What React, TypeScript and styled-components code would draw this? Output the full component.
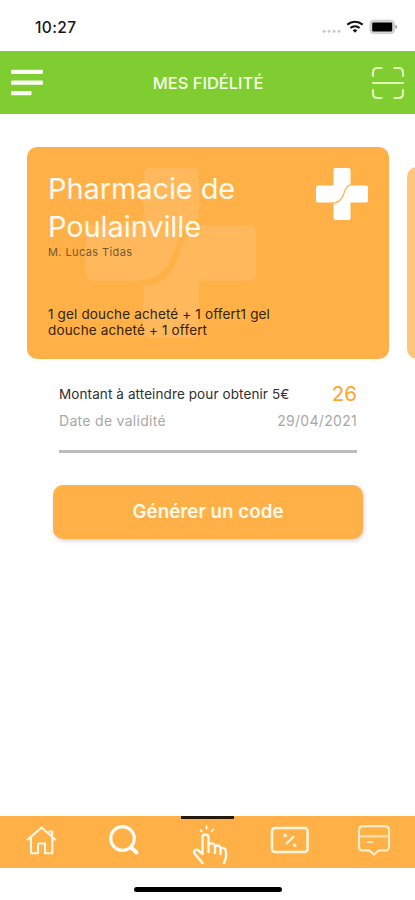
import React from "react";
import styled, { createGlobalStyle } from "styled-components";

const ORANGE = "#ffb147";
const GREEN = "#80cd32";

const GlobalStyle = createGlobalStyle`
  * { box-sizing: border-box; }
  body { margin: 0; background: #fff; font-family: Inter, "Liberation Sans", sans-serif; }
  svg { display: block; flex: none; }
`;

const Screen = styled.div`
  width: 415px;
  height: 900px;
  overflow: hidden;
  display: flex;
  flex-direction: column;
  background: #fff;
`;

const StatusBar = styled.div`
  height: 51px;
  flex: none;
  display: flex;
  justify-content: space-between;
  padding: 18px 17px 0 35px;
`;

const Time = styled.span`
  font-size: 15.5px;
  line-height: 19px;
  font-weight: 500;
  letter-spacing: 0.4px;
  color: #161616;
`;

const Header = styled.header`
  height: 63px;
  flex: none;
  display: grid;
  grid-template-columns: 60px 1fr 60px;
  align-items: center;
  padding: 0 10px 0 11px;
  background: ${GREEN};
`;

const Title = styled.h1`
  margin: 0;
  font-size: 16.5px;
  line-height: 20px;
  font-weight: 500;
  text-align: center;
  color: #f7ffe8;
`;

const IconButton = styled.button<{ $end?: boolean }>`
  display: flex;
  justify-content: ${(p) => (p.$end ? "flex-end" : "flex-start")};
  padding: 0;
  border: 0;
  background: none;
`;

const Carousel = styled.div`
  display: flex;
  align-items: flex-end;
  gap: 18px;
  height: 212px;
  flex: none;
  margin: 33px 0 0 27px;
`;

const Card = styled.article`
  position: relative;
  width: 361.5px;
  height: 212px;
  flex: none;
  display: flex;
  flex-direction: column;
  padding: 21px;
  border-radius: 10px;
  background: ${ORANGE};
`;

const NextCard = styled.div`
  width: 361px;
  height: 192px;
  flex: none;
  border-radius: 10px;
  background: #ffc57a;
`;

const Watermark = styled.div`
  position: absolute;
  left: 59px;
  top: 21px;
`;

const CardTop = styled.div`
  position: relative;
  display: flex;
  justify-content: space-between;
`;

const ShopName = styled.h2`
  margin: 0;
  padding-top: 2px;
  width: 220px;
  font-size: 29px;
  line-height: 38px;
  font-weight: 400;
  letter-spacing: -0.1px;
  color: #fffaf0;
`;

const Owner = styled.div`
  position: relative;
  margin-top: -1px;
  font-size: 11px;
  line-height: 14px;
  letter-spacing: 0.4px;
  color: #77592f;
`;

const Offer = styled.p`
  position: relative;
  margin: auto 0 0;
  width: 240px;
  font-size: 13.5px;
  line-height: 16px;
  letter-spacing: 0.15px;
  color: #35230a;
`;

const Details = styled.section`
  flex: none;
  margin: 21px 58px 0 59px;
  height: 73px;
  border-bottom: 3px solid #bdbdbd;
`;

const Row = styled.div<{ $height: number }>`
  display: flex;
  align-items: center;
  justify-content: space-between;
  height: ${(p) => p.$height}px;
`;

const Label = styled.span<{ $muted?: boolean }>`
  font-size: ${(p) => (p.$muted ? 14 : 13.5)}px;
  letter-spacing: ${(p) => (p.$muted ? 0.3 : 0.1)}px;
  color: ${(p) => (p.$muted ? "#a8a8a8" : "#303030")};
  white-space: nowrap;
`;

const Amount = styled.span`
  font-size: 20.5px;
  color: #ffa52d;
`;

const Generate = styled.button`
  flex: none;
  margin: 32px 52px 0 53px;
  height: 54px;
  padding: 0;
  border: 0;
  border-radius: 10px;
  background: ${ORANGE};
  box-shadow: 1px 2px 4px rgba(40, 40, 70, 0.2);
  color: #fffaec;
  font: 600 18.8px/54px Inter, "Liberation Sans", sans-serif;
`;

const TabBar = styled.nav`
  flex: none;
  margin-top: auto;
  height: 52px;
  display: grid;
  grid-template-columns: repeat(5, 1fr);
  padding-right: 4px;
  background: ${ORANGE};
`;

const Tab = styled.button<{ $active?: boolean }>`
  min-width: 0;
  display: flex;
  justify-content: center;
  padding: 0;
  border: 0;
  background: none;
  border-top: 0;
  ${(p) =>
    p.$active
      ? "margin-right: -4px; padding-right: 4px; background: linear-gradient(#24190b, #24190b) 17px 0 / 53px 3px no-repeat;"
      : ""}
`;

const HomeArea = styled.div`
  flex: none;
  height: 32px;
  display: flex;
  justify-content: center;
  padding-top: 19px;
`;

const HomeIndicator = styled.div`
  width: 148px;
  height: 5px;
  border-radius: 3px;
  background: #000;
`;

function Cross({ size, fill, line, lineWidth }: { size: number; fill: string; line: string; lineWidth: number }) {
  return (
    <svg width={size} height={size} viewBox="0 0 52 52">
      <path
        fill={fill}
        d="M19.5 0h13a2 2 0 0 1 2 2v15.5H50a2 2 0 0 1 2 2v13a2 2 0 0 1-2 2H34.5V50a2 2 0 0 1-2 2h-13a2 2 0 0 1-2-2V34.5H2a2 2 0 0 1-2-2v-13a2 2 0 0 1 2-2h15.5V2a2 2 0 0 1 2-2z"
      />
      <path d="M16.5 35.2C23 35.2 25.5 31.5 27.5 26.5C29 22 30.5 17 36 16.3" fill="none" stroke={line} strokeWidth={lineWidth} />
    </svg>
  );
}

const StatusIcons = () => (
  <svg width="76" height="18" viewBox="0 0 76 18">
    <g fill="#c9c9c9">
      <circle cx="2" cy="13.2" r="1.5" />
      <circle cx="7" cy="13.2" r="1.5" />
      <circle cx="12" cy="13.2" r="1.5" />
      <circle cx="17" cy="13.2" r="1.5" />
    </g>
    <g fill="none" stroke="#111" strokeWidth="2.1">
      <path d="M25.3 6.6a12 12 0 0 1 15.4 0" />
      <path d="M28.4 10a7.1 7.1 0 0 1 9.2 0" />
    </g>
    <path d="M30.7 12.2a3.6 3.6 0 0 1 4.6 0L33 14.8z" fill="#111" />
    <rect x="48" y="2.2" width="24.500" height="13.400" rx="3.6" fill="#d5d5d5" stroke="#c4c4c4" strokeWidth="0.8" />
    <rect x="50.2" y="4.4" width="20" height="9" rx="1.2" fill="#000" />
    <path d="M73.4 6.8c2.2.6 2.2 3.6 0 4.2z" fill="#999" />
  </svg>
);

const MenuIcon = () => (
  <svg width="33" height="28" viewBox="0 0 33 28" fill="#fbfff3">
    <rect y="0.7" width="32" height="4.2" rx="0.8" />
    <rect y="11.5" width="32" height="4.2" rx="0.8" />
    <rect y="22" width="20.5" height="4.2" rx="0.8" />
  </svg>
);

const ScanIcon = () => (
  <svg width="34" height="34" viewBox="0 0 34 34" fill="none" stroke="#dff8b6" strokeWidth="2.2" strokeLinecap="round">
    <path d="M2 10V6.500Q2 2 6.500 2H10.500M23.500 2h4Q32 2 32 6.500V10M2 24v3.500Q2 32 6.500 32H10.500M23.500 32h4Q32 32 32 27.500V24M2 17h30" />
  </svg>
);

const HomeIcon = () => (
  <svg width="82" height="52" viewBox="1 0 82 52" fill="none" stroke="#fff8e6" strokeWidth="2.1" strokeLinejoin="round" strokeLinecap="round">
    <path d="M28.800 23.500L42.500 11.500L56.200 23.500M32 21.500V37.300h7V27.500h7V37.300h7.300V21.500M50.500 15.500h2.700v4.500" />
  </svg>
);

const SearchIcon = () => (
  <svg width="82" height="52" viewBox="1 0 82 52" fill="none" stroke="#fffdf5" strokeWidth="3.2" strokeLinecap="round">
    <circle cx="41.500" cy="22.500" r="11.800" />
    <path d="M50 31.500L55.500 36.500" strokeWidth="4" />
  </svg>
);

const TapIcon = () => (
  <svg width="82" height="52" viewBox="1 0 82 52" fill="none" stroke="#fffaf0" strokeWidth="2.400" strokeLinejoin="round" strokeLinecap="round">
    <g transform="translate(-3.500 0)">
      <path d="M43 47L35 37.500C33.500 35 36.500 32.500 39 34.500L43 38V21.500C43 17.500 49 17.500 49 21.500V36M49 28.500C53 26 55.500 28 55.500 31V37M55.500 30.500C58.500 28.500 61 30 61 33V38M61 32.500C63.500 31 66.500 32.500 66.500 35.500V40C66.500 43 65.500 44.500 64.500 47" />
      <path d="M47 10.500v2M41.300 14l1 1.600M53.800 13.500l-1.700 2" strokeWidth="1.800" />
    </g>
  </svg>
);

const CouponIcon = () => (
  <svg width="82" height="52" viewBox="1 0 82 52" fill="none" stroke="#fff6df" strokeWidth="2.500" strokeLinecap="round">
    <rect x="26" y="12" width="35.600" height="24" rx="3" />
    <path d="M40.500 27.500L47.500 20.800" strokeWidth="1.900" />
    <g fill="#fff6df" stroke="none">
      <circle cx="39.200" cy="19.500" r="1.800" />
      <circle cx="48.700" cy="29.200" r="1.800" />
    </g>
  </svg>
);

const MessageIcon = () => (
  <svg width="82" height="52" viewBox="1 0 82 52" fill="none" stroke="#fff0cd" strokeWidth="2.100" strokeLinejoin="round" strokeLinecap="round">
    <g transform="translate(4 0)">
      <path d="M31 10.200h22q4 0 4 4v16.300q0 4-4 4h-6.500L42 38.500l-4.500-4H31q-4 0-4-4V14.200q0-4 4-4z" />
      <path d="M28 20.200h28" strokeWidth="2.400" stroke="#ffdca6" />
      <path d="M35.500 26.200h5" strokeWidth="1.500" />
    </g>
  </svg>
);

export default function App() {
  return (
    <>
      <GlobalStyle />
      <Screen>
        <StatusBar>
          <Time>10:27</Time>
          <StatusIcons />
        </StatusBar>
        <Header>
          <IconButton aria-label="Menu"><MenuIcon /></IconButton>
          <Title>MES FIDÉLITÉ</Title>
          <IconButton $end aria-label="Scanner"><ScanIcon /></IconButton>
        </Header>
        <Carousel>
          <Card>
            <Watermark>
              <Cross size={170} fill="#ffb95c" line={ORANGE} lineWidth={1.8} />
            </Watermark>
            <CardTop>
              <ShopName>Pharmacie de Poulainville</ShopName>
              <Cross size={52} fill="#fff" line={ORANGE} lineWidth={1.2} />
            </CardTop>
            <Owner>M. Lucas Tidas</Owner>
            <Offer>1 gel douche acheté + 1 offert1 gel douche acheté + 1 offert</Offer>
          </Card>
          <NextCard />
        </Carousel>
        <Details>
          <Row $height={27}>
            <Label>Montant à atteindre pour obtenir 5€</Label>
            <Amount>26</Amount>
          </Row>
          <Row $height={27}>
            <Label $muted>Date de validité</Label>
            <Label $muted>29/04/2021</Label>
          </Row>
        </Details>
        <Generate>Générer un code</Generate>
        <TabBar>
          <Tab aria-label="Accueil"><HomeIcon /></Tab>
          <Tab aria-label="Recherche"><SearchIcon /></Tab>
          <Tab $active aria-label="Fidélité"><TapIcon /></Tab>
          <Tab aria-label="Coupons"><CouponIcon /></Tab>
          <Tab aria-label="Messages"><MessageIcon /></Tab>
        </TabBar>
        <HomeArea><HomeIndicator /></HomeArea>
      </Screen>
    </>
  );
}
